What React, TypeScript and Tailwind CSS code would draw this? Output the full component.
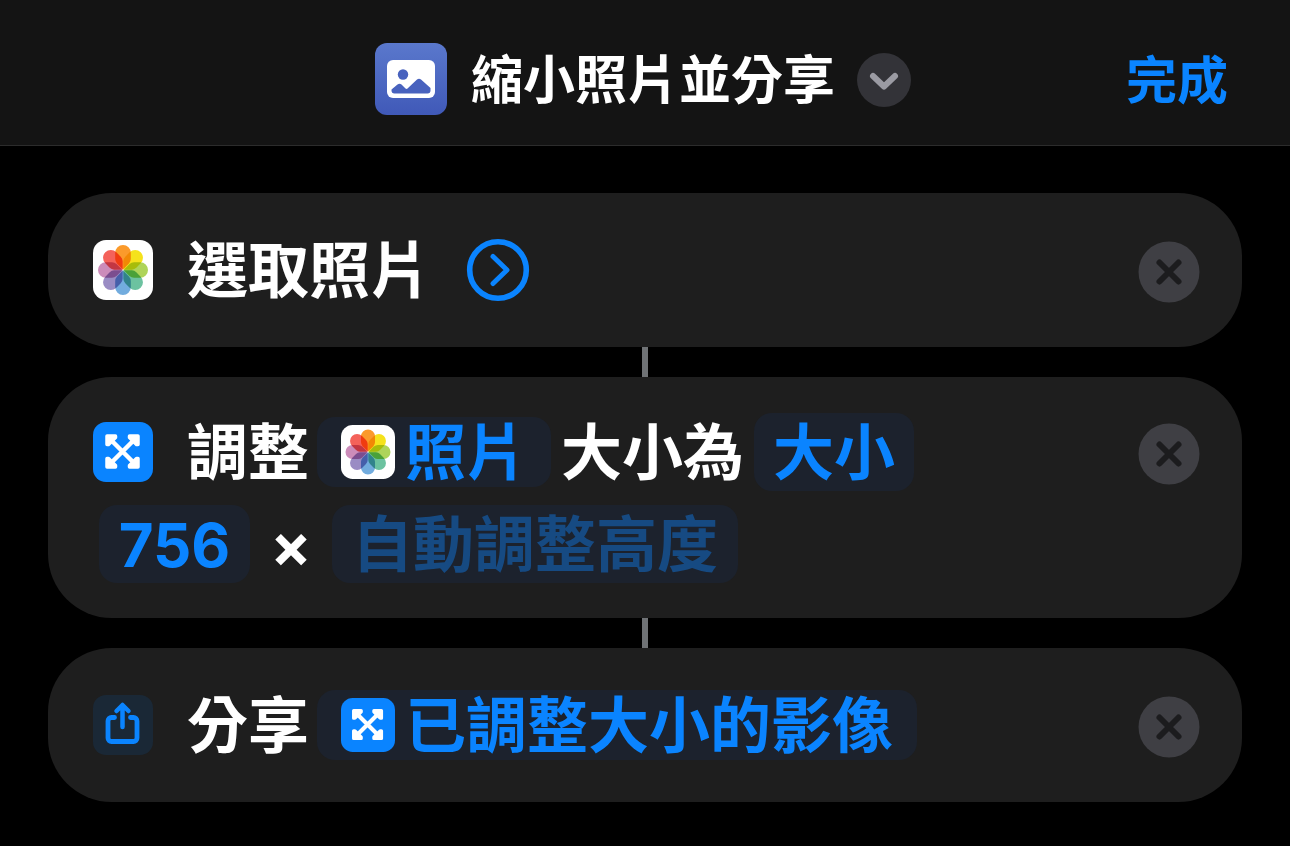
import type { ReactNode } from "react";

const petals = [
  { angle: 0, color: "#fb9a2b" },
  { angle: 45, color: "#f5e21c" },
  { angle: 90, color: "#aed45a" },
  { angle: 135, color: "#6cc2a0" },
  { angle: 180, color: "#72acde" },
  { angle: 225, color: "#9a8cc4" },
  { angle: 270, color: "#cc8cba" },
  { angle: 315, color: "#f4625a" },
];

function PhotosIcon({ className }: { className: string }) {
  return (
    <svg viewBox="0 0 60 60" className={className} aria-hidden="true">
      <rect width="60" height="60" rx="13" fill="#fff" />
      <g className="isolate">
        <rect x="4" y="4" width="52" height="52" fill="#fff" />
        {petals.map((petal) => (
          <path
            key={petal.angle}
            d="M30 29.500 24 23.500Q22.200 21.500 22.200 19v-6.200a7.800 7.800 0 0 1 15.600 0v6.200q0 2.500-1.800 4.500z"
            fill={petal.color}
            transform={`rotate(${petal.angle} 30 30)`}
            className="mix-blend-multiply"
          />
        ))}
      </g>
    </svg>
  );
}

function ResizeIcon({ className }: { className: string }) {
  return (
    <svg viewBox="0 0 60 60" className={className} aria-hidden="true">
      <rect width="60" height="60" rx="13" fill="#0a84ff" />
      <g stroke="#fff" strokeLinecap="round" strokeLinejoin="round">
        <path d="M17 17 42 42M42 17 17 42" strokeWidth="4.5" />
        <path
          d="M14 14h8.500v1.500l-7 7h-1.500zM45 14v8.500h-1.500l-7-7v-1.500zM14 45v-8.500h1.500l7 7v1.500zM45 45h-8.500v-1.500l7-7h1.500z"
          fill="#fff"
          strokeWidth="3.500"
        />
      </g>
    </svg>
  );
}

function ShareIcon({ className }: { className: string }) {
  return (
    <svg viewBox="0 0 60 60" className={className} aria-hidden="true">
      <rect width="60" height="60" rx="13" fill="#1a2836" />
      <g fill="none" stroke="#0a84ff" strokeWidth="4.8" strokeLinecap="round" strokeLinejoin="round">
        <path d="M21.500 22.500h-3a3.500 3.500 0 0 0-3.500 3.500v17a3.500 3.500 0 0 0 3.500 3.500h22a3.500 3.500 0 0 0 3.500-3.500v-17a3.500 3.500 0 0 0-3.500-3.500h-3" />
        <path d="M29.500 32v-21M23.500 16l6-6 6 6" strokeWidth="4.500" />
      </g>
    </svg>
  );
}

function ShortcutIcon() {
  return (
    <svg viewBox="0 0 72 72" className="size-[72px] shrink-0" aria-hidden="true">
      <defs>
        <linearGradient id="shortcut-bg" x1="0" y1="0" x2="0" y2="1">
          <stop offset="0" stopColor="#5a78cc" />
          <stop offset="1" stopColor="#4059b8" />
        </linearGradient>
      </defs>
      <rect width="72" height="72" rx="12" fill="url(#shortcut-bg)" />
      <rect x="12" y="17" width="48" height="38" rx="6" fill="#fff" />
      <g fill="#4862be">
        <circle cx="28" cy="31.5" r="5.2" />
        <path d="M16.500 46.500 22.500 41.500q2-1.500 4 0l4 4q1 .8 2 0l9.500-9q2-1.700 4 0l9.500 8.500v2.500a3 3 0 0 1-3 3h-33a3 3 0 0 1-3-3z" />
      </g>
    </svg>
  );
}

function Connector() {
  return <li aria-hidden="true" className="h-[30px] w-1.5 self-center bg-[#6f7275]" />;
}

function RemoveButton({ label }: { label: string }) {
  return (
    <button type="button" aria-label={label} className="shrink-0 rounded-full">
      <svg viewBox="0 0 62 62" className="size-[62px]" aria-hidden="true">
        <circle cx="31" cy="31" r="30.5" fill="#3f3f44" />
        <path d="M21.500 21.500 40.500 40.500M40.500 21.500 21.500 40.500" stroke="#1c1c1e" strokeWidth="6" strokeLinecap="round" />
      </svg>
    </button>
  );
}

const card = "flex items-start rounded-[64px] bg-[#1e1e1e] pr-[42px] pl-[45px]";
const row = "flex h-20 items-center whitespace-nowrap";
const chip = "flex items-center rounded-[18px] bg-[#1c222d] text-[#0a84ff]";
const field = "h-[78px] rounded-[18px] bg-[#1c222d] pt-0.5 text-center text-[#0a84ff] outline-none";

function ActionCard({ icon, name, children }: { icon: ReactNode; name: string; children: ReactNode }) {
  return (
    <li className={`${card} pt-[37px] pb-[33px]`}>
      <div className={`${row} min-w-0 flex-1`}>
        {icon}
        <h2 className="ml-[34px] pt-0.5">{name}</h2>
        {children}
      </div>
      <div className="flex h-[84px] items-center">
        <RemoveButton label={`移除${name}`} />
      </div>
    </li>
  );
}

export default function App() {
  return (
    <div className="min-h-screen bg-black font-['Inter','Noto_Sans_CJK_TC',sans-serif] font-bold text-white">
      <header className="grid grid-cols-[1fr_auto_1fr] items-center border-b border-[#2c2c2c] bg-[#141414] px-[62px] pt-[43px] pb-[30px]">
        <div />
        <div className="flex items-center pr-1">
          <ShortcutIcon />
          <h1 className="ml-6 pt-1 text-[52px] leading-[68px] whitespace-nowrap">縮小照片並分享</h1>
          <button type="button" aria-label="選項" className="mt-0.5 ml-[22px] shrink-0 rounded-full">
            <svg viewBox="0 0 54 54" className="size-[54px]" aria-hidden="true">
              <circle cx="27" cy="27" r="27" fill="#333338" />
              <path d="M16 23 27 33.500 38 23" fill="none" stroke="#9b9ba3" strokeWidth="6" strokeLinecap="round" strokeLinejoin="round" />
            </svg>
          </button>
        </div>
        <button type="button" className="justify-self-end pt-1 text-[51px] leading-[68px] whitespace-nowrap text-[#0a84ff]">
          完成
        </button>
      </header>

      <main className="px-12 py-[47px] text-[61px] leading-[68px]">
        <ol className="flex flex-col">
          <ActionCard name="選取照片" icon={<PhotosIcon className="size-[60px] shrink-0" />}>
            <button type="button" aria-label="顯示更多" className="ml-[35px] rounded-full">
              <svg viewBox="0 0 64 64" className="size-16" fill="none" stroke="#0a84ff" aria-hidden="true">
                <circle cx="32" cy="32" r="28.300" strokeWidth="5.600" />
                <path d="M27 18.500 41 32 27 45.500" strokeWidth="5" strokeLinecap="round" strokeLinejoin="round" />
              </svg>
            </button>
          </ActionCard>

          <Connector />

          <li className={`${card} pt-[35px] pb-[34px]`}>
            <div className="min-w-0 flex-1">
              <div className={row}>
                <ResizeIcon className="size-[60px] shrink-0" />
                <h2 className="ml-[34px] pt-0.5">調整</h2>
                <button type="button" className={`${chip} ml-2 h-[70px] px-6`}>
                  <PhotosIcon className="mr-[10px] size-[54px]" />
                  <span className="pt-0.5">照片</span>
                </button>
                <span className="ml-[10px] pt-0.5">大小為</span>
                <button type="button" className={`${chip} ml-[10px] h-[78px] px-[19px]`}>
                  <span className="pt-0.5">大小</span>
                </button>
              </div>
              <div className={`${row} mt-3 ml-[6px]`}>
                <input aria-label="寬度" defaultValue="756" className={`${field} w-[151px] text-[60px]`} />
                <span className="w-[82px] pt-0.5 text-center">×</span>
                <input
                  aria-label="高度"
                  placeholder="自動調整高度"
                  className={`${field} w-[406px] placeholder:text-[#164a82] placeholder:opacity-100`}
                />
              </div>
            </div>
            <div className="flex h-[84px] items-center">
              <RemoveButton label="移除調整大小" />
            </div>
          </li>

          <Connector />

          <ActionCard name="分享" icon={<ShareIcon className="size-[60px] shrink-0" />}>
            <button type="button" className={`${chip} ml-2 h-[70px] px-6`}>
              <ResizeIcon className="mr-[10px] size-[54px]" />
              <span className="pt-0.5">已調整大小的影像</span>
            </button>
          </ActionCard>
        </ol>
      </main>
    </div>
  );
}
